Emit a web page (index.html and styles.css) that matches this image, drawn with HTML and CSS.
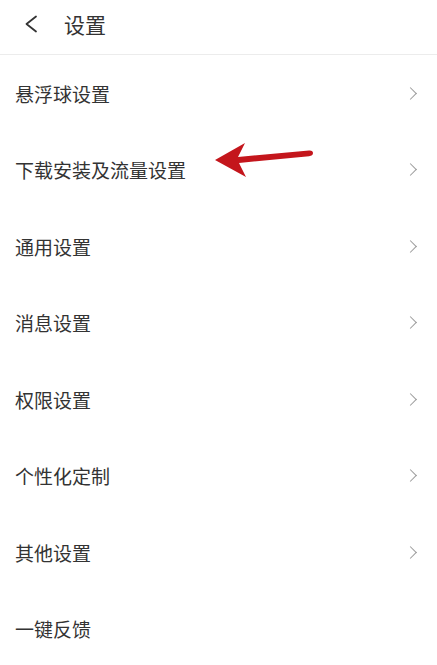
FILE: index.html
```html
<!DOCTYPE html>
<html lang="zh">
<head>
<meta charset="utf-8">
<link rel="stylesheet" href="styles.css">
</head>
<body>
<div class="page">
  <header class="topbar">
    <svg class="back" width="14" height="18" viewBox="0 0 14 18"><path d="M12 1.5 L2.5 9 L12 16.5" fill="none" stroke="#333" stroke-width="1.8" stroke-linecap="round" stroke-linejoin="round"/></svg>
    <span class="title">设置</span>
  </header>
  <ul class="list">
    <li class="row"><span>悬浮球设置</span><i class="chev"></i></li>
    <li class="row"><span>下载安装及流量设置</span><i class="chev"></i></li>
    <li class="row"><span>通用设置</span><i class="chev"></i></li>
    <li class="row"><span>消息设置</span><i class="chev"></i></li>
    <li class="row"><span>权限设置</span><i class="chev"></i></li>
    <li class="row"><span>个性化定制</span><i class="chev"></i></li>
    <li class="row"><span>其他设置</span><i class="chev"></i></li>
    <li class="row"><span>一键反馈</span></li>
  </ul>
  <svg class="arrow" width="110" height="40" viewBox="0 0 110 40">
    <path d="M2 20 L32 3 L25 17 L96 10.5 Q100 10.2 100 13 Q100 15.8 96 16.2 L26 23 L33 37 Z" fill="#c4161c"/>
  </svg>
</div>
</body>
</html>
```
FILE: styles.css
```css
html, body {
  margin: 0;
  padding: 0;
  background: #fff;
}
body {
  font-family: "Noto Sans CJK SC", "Noto Sans", sans-serif;
  color: #333;
}
.page {
  position: relative;
  width: 437px;
  height: 665px;
  overflow: hidden;
}
.topbar {
  height: 54px;
  border-bottom: 1px solid #ececec;
  display: flex;
  align-items: center;
  box-sizing: border-box;
  height: 55px;
  padding-left: 24px;
  padding-bottom: 6px;
}
.back {
  display: block;
}
.title {
  margin-left: 26px;
  font-size: 21px;
  line-height: 1;
  color: #333;
}
.list {
  list-style: none;
  margin: 0;
  padding: 0;
}
.row {
  height: 76.5px;
  display: flex;
  align-items: center;
  justify-content: space-between;
  padding: 0 20px 0 15px;
  font-size: 19px;
  color: #333;
}
.row span {
  line-height: 1;
}
.chev {
  display: block;
  width: 8px;
  height: 8px;
  border-top: 1.6px solid #9a9a9a;
  border-right: 1.6px solid #9a9a9a;
  transform: rotate(45deg);
  margin-right: 2px;
}
.arrow {
  position: absolute;
  left: 213px;
  top: 140px;
}
```
